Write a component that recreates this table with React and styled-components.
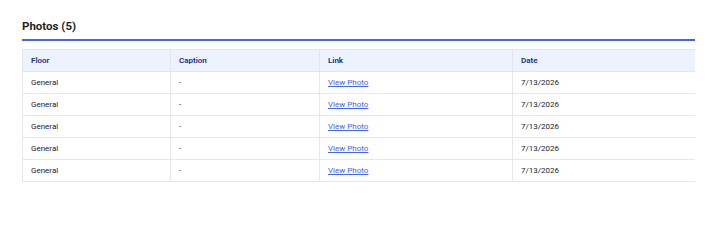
import React from 'react';
import styled, { createGlobalStyle } from 'styled-components';

const GlobalStyle = createGlobalStyle`
  html, body {
    margin: 0;
    padding: 0;
    background: #ffffff;
  }
  body {
    font-family: Roboto, 'Liberation Sans', sans-serif;
  }
`;

const Page = styled.div`
  padding: 15px 16px 0 22px;
`;

const Section = styled.section`
  overflow: hidden;
`;

const Title = styled.h2`
  margin: 0 0 8px;
  padding: 1px 0 3px;
  font-size: 11.5px;
  line-height: 20px;
  font-weight: 700;
  color: #1f2328;
  border-bottom: 2px solid #4a62eb;
`;

const Table = styled.table`
  border-collapse: collapse;
  table-layout: fixed;
  width: 700px;
  font-size: 8px;
`;

const HeadCell = styled.th`
  box-sizing: border-box;
  width: ${(p) => p.$w}px;
  padding: 5px 8px;
  line-height: 11px;
  text-align: left;
  font-weight: 600;
  color: #252b78;
  background: #edf3fe;
  border: 1px solid #e2e5ea;
`;

const Cell = styled.td`
  box-sizing: border-box;
  padding: 5px 8px;
  line-height: 11px;
  color: #222428;
  border: 1px solid #e5e7eb;
`;

const PhotoLink = styled.a`
  color: #4466e6;
  text-decoration: underline;
`;

const columns = [
  { label: 'Floor', width: 148 },
  { label: 'Caption', width: 149 },
  { label: 'Link', width: 193 },
  { label: 'Date', width: 210 },
];

const photos = Array.from({ length: 5 }, (_, i) => ({
  id: i,
  floor: 'General',
  caption: '-',
  date: '7/13/2026',
}));

export default function App() {
  return (
    <Page>
      <GlobalStyle />
      <Section>
        <Title>Photos ({photos.length})</Title>
        <Table>
          <thead>
            <tr>
              {columns.map((c) => (
                <HeadCell key={c.label} $w={c.width}>{c.label}</HeadCell>
              ))}
            </tr>
          </thead>
          <tbody>
            {photos.map((p) => (
              <tr key={p.id}>
                <Cell>{p.floor}</Cell>
                <Cell>{p.caption}</Cell>
                <Cell><PhotoLink href="#">View Photo</PhotoLink></Cell>
                <Cell>{p.date}</Cell>
              </tr>
            ))}
          </tbody>
        </Table>
      </Section>
    </Page>
  );
}
